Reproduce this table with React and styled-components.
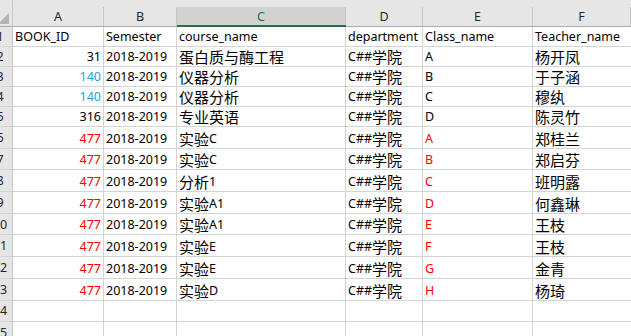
import React from 'react'
import styled, { createGlobalStyle } from 'styled-components'

const GREEN = '#217346'
const RED = '#ff0000'
const BLUE = '#20a4e0'

const COLUMNS = ['A', 'B', 'C', 'D', 'E', 'F']
const SELECTED_COL = 'C'

const HEADER = ['BOOK_ID', 'Semester', 'course_name', 'department', 'Class_name', 'Teacher_name']

const ROWS = [
    { id: 31, course: '蛋白质与酶工程', cls: 'A', teacher: '杨开凤' },
    { id: 140, course: '仪器分析', cls: 'B', teacher: '于子涵', idColor: BLUE },
    { id: 140, course: '仪器分析', cls: 'C', teacher: '穆纨', idColor: BLUE },
    { id: 316, course: '专业英语', cls: 'D', teacher: '陈灵竹' },
    { id: 477, course: '实验C', cls: 'A', teacher: '郑桂兰', idColor: RED, clsColor: RED },
    { id: 477, course: '实验C', cls: 'B', teacher: '郑启芬', idColor: RED, clsColor: RED },
    { id: 477, course: '分析1', cls: 'C', teacher: '班明露', idColor: RED, clsColor: RED },
    { id: 477, course: '实验A1', cls: 'D', teacher: '何鑫琳', idColor: RED, clsColor: RED },
    { id: 477, course: '实验A1', cls: 'E', teacher: '王枝', idColor: RED, clsColor: RED },
    { id: 477, course: '实验E', cls: 'F', teacher: '王枝', idColor: RED, clsColor: RED },
    { id: 477, course: '实验E', cls: 'G', teacher: '金青', idColor: RED, clsColor: RED },
    { id: 477, course: '实验D', cls: 'H', teacher: '杨琦', idColor: RED, clsColor: RED },
]

const EMPTY_ROWS = [14, 15]

// chinese runs get a bigger face, like excel's fallback font does
function renderText(str) {
    return String(str)
        .split(/([\u3400-\u9fff]+)/)
        .filter(Boolean)
        .map((part, i) =>
            /[\u3400-\u9fff]/.test(part) ? <Han key={i}>{part}</Han> : <span key={i}>{part}</span>
        )
}

export default function App() {
    return (
        <>
            <GlobalStyle />
            <Sheet>
                <Corner />
                {COLUMNS.map(col => (
                    <HeadCell key={col} $selected={col === SELECTED_COL}>
                        <HeadLabel $selected={col === SELECTED_COL}>{col}</HeadLabel>
                    </HeadCell>
                ))}

                <RowHead><RowNum>1</RowNum></RowHead>
                {HEADER.map(h => (
                    <Cell key={h} $last={h === 'Teacher_name'}>{renderText(h)}</Cell>
                ))}

                {ROWS.map((r, i) => (
                    <React.Fragment key={i}>
                        <RowHead><RowNum>{i + 2}</RowNum></RowHead>
                        <Cell $align="right" $color={r.idColor}>{r.id}</Cell>
                        <Cell>2018-2019</Cell>
                        <Cell>{renderText(r.course)}</Cell>
                        <Cell>{renderText('C##学院')}</Cell>
                        <Cell $color={r.clsColor}>{r.cls}</Cell>
                        <Cell $last>{renderText(r.teacher)}</Cell>
                    </React.Fragment>
                ))}

                {EMPTY_ROWS.map(n => (
                    <React.Fragment key={n}>
                        <RowHead><RowNum>{n}</RowNum></RowHead>
                        {COLUMNS.map(col => (
                            <Cell key={col} $last={col === 'F'} />
                        ))}
                    </React.Fragment>
                ))}
            </Sheet>
        </>
    )
}

const GlobalStyle = createGlobalStyle`
  html, body {
    margin: 0;
    padding: 0;
    background: #fff;
    overflow: hidden;
  }
  body {
    font-family: "Noto Sans", "Noto Sans CJK SC", sans-serif;
  }
`

const Sheet = styled.div`
  display: grid;
  grid-template-columns: 13px 91px 73px 169px 77px 110px 1fr;
  grid-template-rows: 27px repeat(5, 20px) repeat(10, 21.7px);
  width: 631px;
  height: 336px;
  overflow: hidden;
  color: #000;
`

const Corner = styled.div`
  position: relative;
  background: #e6e6e6;
  border-right: 1px solid #c6c6c6;
  border-bottom: 1px solid #ababab;
  box-sizing: border-box;

  &::after {
    content: '';
    position: absolute;
    right: 3px;
    bottom: 2px;
    border-style: solid;
    border-width: 0 0 11px 11px;
    border-color: transparent transparent #b4b4b4 transparent;
  }
`

const HeadCell = styled.div`
  display: flex;
  flex-direction: column;
  padding-top: 7px;
  background: #e6e6e6;
  box-sizing: border-box;
  border-bottom: ${p => (p.$selected ? `2px solid ${GREEN}` : '1px solid #ababab')};
`

const HeadLabel = styled.div`
  flex: 1;
  display: flex;
  align-items: center;
  justify-content: center;
  border-right: 1px solid #c6c6c6;
  background: ${p => (p.$selected ? '#d2d2d2' : '#e6e6e6')};
  color: ${p => (p.$selected ? GREEN : '#262626')};
  font-size: 12.5px;
  line-height: 15px;
  padding-bottom: ${p => (p.$selected ? '0' : '1px')};
`

const RowHead = styled.div`
  overflow: hidden;
  background: #e6e6e6;
  border-right: 1px solid #c6c6c6;
  border-bottom: 1px solid #d4d4d4;
  box-sizing: border-box;
  display: flex;
  align-items: center;
`

const RowNum = styled.span`
  flex: none;
  width: 24px;
  margin-left: -12px;
  text-align: center;
  font-size: 12.5px;
  line-height: 15px;
  color: #262626;
`

const Cell = styled.div`
  display: flex;
  align-items: flex-end;
  justify-content: ${p => (p.$align === 'right' ? 'flex-end' : 'flex-start')};
  padding: 0 2px 1px 2px;
  box-sizing: border-box;
  border-right: ${p => (p.$last ? 'none' : '1px solid #d4d4d4')};
  border-bottom: 1px solid #d4d4d4;
  overflow: hidden;
  white-space: nowrap;
  font-size: 12.5px;
  line-height: 17px;
  color: ${p => p.$color || '#000'};
`

const Han = styled.span`
  font-family: "Noto Sans CJK SC", sans-serif;
  font-size: 15px;
  line-height: 17px;
`
